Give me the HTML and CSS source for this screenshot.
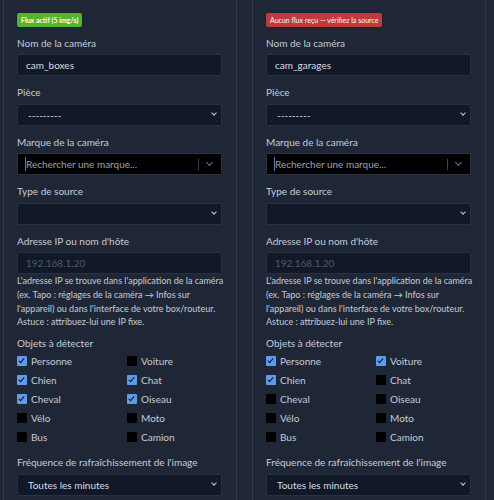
FILE: index.html
```html
<!DOCTYPE html>
<html lang="fr">
<head>
    <meta charset="UTF-8">
    <meta name="viewport" content="width=device-width, initial-scale=1.0">
    <title>Caméras</title>
    <link rel="stylesheet" href="styles.css">
</head>
<body>
    <div id="cameras">
        <div class="camera">
            <span class="badge ok">Flux actif (5 img/s)</span>
            <label class="field-label">Nom de la caméra</label>
            <input class="field" type="text" value="cam_boxes">
            <label class="field-label">Pièce</label>
            <div class="select"><select class="field"><option>---------</option></select></div>
            <label class="field-label">Marque de la caméra</label>
            <div class="search">
                <span class="caret"></span>
                <span class="placeholder">Rechercher une marque...</span>
                <span class="sep"></span>
                <span class="chev"></span>
            </div>
            <label class="field-label">Type de source</label>
            <div class="select"><select class="field"><option></option></select></div>
            <label class="field-label">Adresse IP ou nom d'hôte</label>
            <input class="field" type="text" placeholder="192.168.1.20">
            <p class="help">L'adresse IP se trouve dans l'application de la caméra (ex. Tapo : réglages de la caméra → Infos sur l'appareil) ou dans l'interface de votre box/routeur.<br>Astuce : attribuez-lui une IP fixe.</p>
            <label class="field-label objects">Objets à détecter</label>
            <div class="objects-grid">
                <label class="check"><input type="checkbox" checked> Personne</label>
                <label class="check"><input type="checkbox"> Voiture</label>
                <label class="check"><input type="checkbox" checked> Chien</label>
                <label class="check"><input type="checkbox" checked> Chat</label>
                <label class="check"><input type="checkbox" checked> Cheval</label>
                <label class="check"><input type="checkbox" checked> Oiseau</label>
                <label class="check"><input type="checkbox"> Vélo</label>
                <label class="check"><input type="checkbox"> Moto</label>
                <label class="check"><input type="checkbox"> Bus</label>
                <label class="check"><input type="checkbox"> Camion</label>
            </div>
            <label class="field-label">Fréquence de rafraîchissement de l'image</label>
            <div class="select"><select class="field"><option>Toutes les minutes</option></select></div>
        </div>
        <div class="camera">
            <span class="badge err">Aucun flux reçu — vérifiez la source</span>
            <label class="field-label">Nom de la caméra</label>
            <input class="field" type="text" value="cam_garages">
            <label class="field-label">Pièce</label>
            <div class="select"><select class="field"><option>---------</option></select></div>
            <label class="field-label">Marque de la caméra</label>
            <div class="search">
                <span class="caret"></span>
                <span class="placeholder">Rechercher une marque...</span>
                <span class="sep"></span>
                <span class="chev"></span>
            </div>
            <label class="field-label">Type de source</label>
            <div class="select"><select class="field"><option></option></select></div>
            <label class="field-label">Adresse IP ou nom d'hôte</label>
            <input class="field" type="text" placeholder="192.168.1.20">
            <p class="help">L'adresse IP se trouve dans l'application de la caméra (ex. Tapo : réglages de la caméra → Infos sur l'appareil) ou dans l'interface de votre box/routeur.<br>Astuce : attribuez-lui une IP fixe.</p>
            <label class="field-label objects">Objets à détecter</label>
            <div class="objects-grid">
                <label class="check"><input type="checkbox" checked> Personne</label>
                <label class="check"><input type="checkbox" checked> Voiture</label>
                <label class="check"><input type="checkbox" checked> Chien</label>
                <label class="check"><input type="checkbox"> Chat</label>
                <label class="check"><input type="checkbox"> Cheval</label>
                <label class="check"><input type="checkbox"> Oiseau</label>
                <label class="check"><input type="checkbox"> Vélo</label>
                <label class="check"><input type="checkbox"> Moto</label>
                <label class="check"><input type="checkbox"> Bus</label>
                <label class="check"><input type="checkbox"> Camion</label>
            </div>
            <label class="field-label">Fréquence de rafraîchissement de l'image</label>
            <div class="select"><select class="field"><option>Toutes les minutes</option></select></div>
        </div>
    </div>
</body>
</html>
```

FILE: styles.css
```css
body {
    margin: 0;
    overflow: hidden;
    font-family: 'Lato', sans-serif;
    background-color: #1f2736;
    color: #c5ccd6;
}
#cameras {
    display: grid;
    grid-template-columns: 234px 234px;
    column-gap: 15px;
    padding-left: 3px;
}
.camera {
    display: flex;
    flex-direction: column;
    align-items: flex-start;
    border-left: 1px solid #2e3848;
    border-right: 1px solid #2e3848;
    padding: 13px 14px 0 13px;
}
.badge {
    font-size: 7px;
    font-weight: 700;
    color: #fff;
    line-height: 14px;
    padding: 0 4px;
    border-radius: 2px;
    box-shadow: 0 0 0 1px #1a2130;
    margin-bottom: 8px;
}
.badge.ok {
    background-color: #55b52a;
}
.badge.err {
    background-color: #c0393b;
    font-weight: 400;
}
.field-label {
    font-size: 10px;
    line-height: 16px;
    margin-bottom: 3px;
}
.field {
    box-sizing: border-box;
    width: 205px;
    height: 22px;
    margin: 0 0 8px 0;
    padding: 0 8px;
    background-color: #111827;
    border: 1px solid #273141;
    border-radius: 2px;
    color: #d8dde5;
    font-family: inherit;
    font-size: 10px;
    outline: none;
}
.field::placeholder {
    color: #4f5a69;
}
.select {
    position: relative;
}
.select select {
    appearance: none;
    padding-left: 10px;
}
.select::after {
    content: '';
    position: absolute;
    right: 6px;
    top: 8px;
    width: 3px;
    height: 3px;
    border-right: 1.5px solid #c5ccd6;
    border-bottom: 1.5px solid #c5ccd6;
    transform: rotate(45deg);
}
.search {
    box-sizing: border-box;
    width: 205px;
    height: 22px;
    margin-bottom: 8px;
    display: flex;
    align-items: center;
    background-color: #000;
    border: 1px solid #2a3342;
    border-radius: 2px;
    padding: 0 6px 0 7px;
    font-size: 10px;
}
.search .caret {
    width: 1px;
    height: 14px;
    background-color: #5f7aa8;
}
.search .placeholder {
    flex: 1;
    color: #9aa3ae;
}
.search .sep {
    width: 1px;
    height: 11px;
    background-color: #3b4250;
    margin-right: 8px;
}
.search .chev {
    width: 4px;
    height: 4px;
    border-right: 1px solid #6b7480;
    border-bottom: 1px solid #6b7480;
    transform: rotate(45deg);
    margin: 0 3px 3px 0;
}
.help {
    width: 207px;
    margin: -8px 0 0 0;
    font-size: 9px;
    line-height: 13.8px;
}
.objects {
    margin-top: 6px;
    margin-bottom: 2px;
}
.objects-grid {
    display: grid;
    grid-template-columns: 110px 95px;
    row-gap: 3px;
    margin-bottom: 9px;
}
.check {
    display: flex;
    align-items: center;
    gap: 4px;
    font-size: 10px;
    line-height: 16px;
}
.check input {
    appearance: none;
    margin: 0;
    width: 10px;
    height: 10px;
    border-radius: 1px;
    background-color: #000;
    position: relative;
}
.check input:checked {
    background-color: #5b9cf0;
}
.check input:checked::before {
    content: '';
    position: absolute;
    left: 3px;
    top: 1px;
    width: 2px;
    height: 5px;
    border-right: 1.5px solid #111;
    border-bottom: 1.5px solid #111;
    transform: rotate(40deg);
}
```
